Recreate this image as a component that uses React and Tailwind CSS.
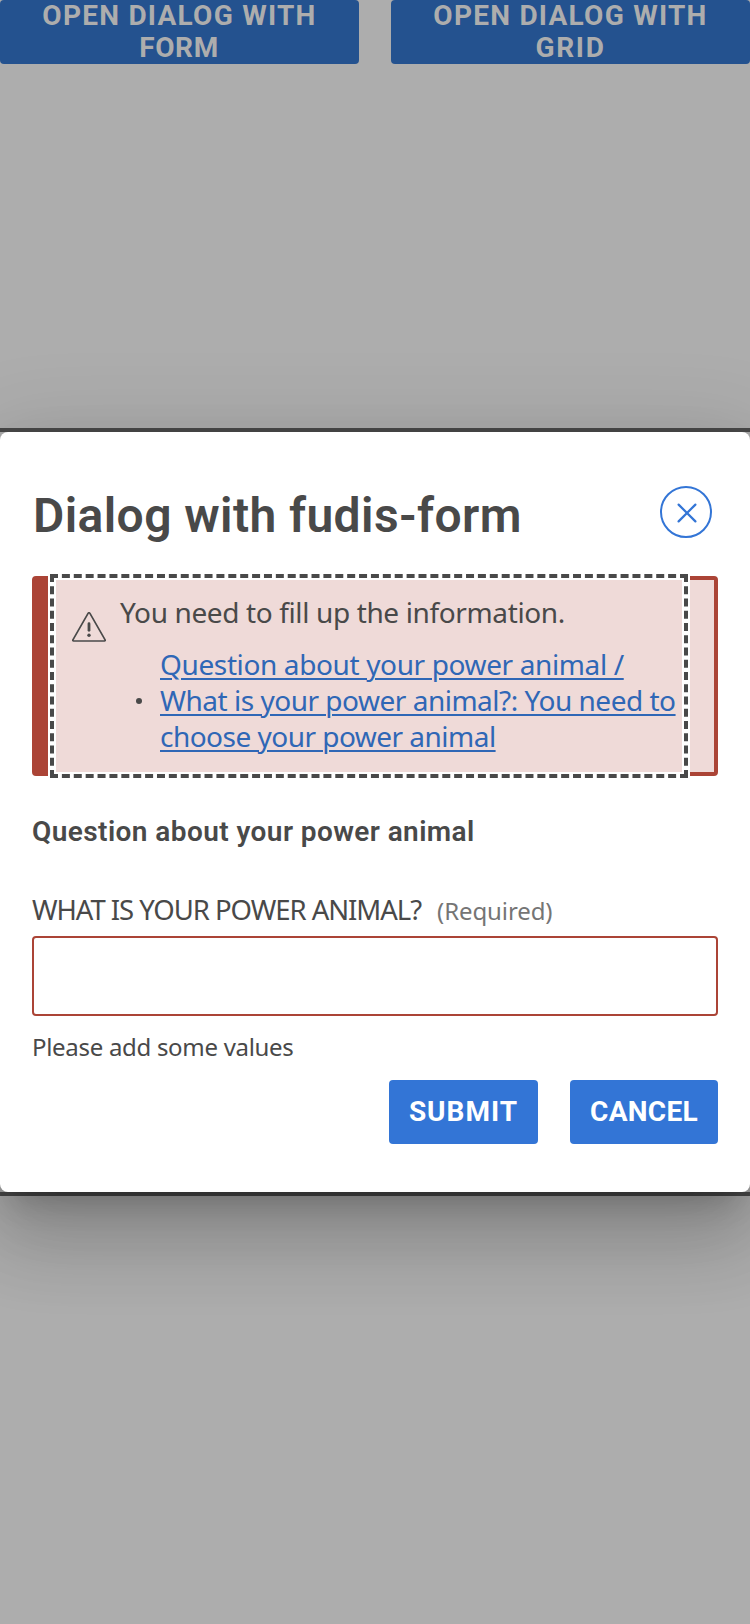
function WarningIcon() {
  return (
    <svg className="mt-8 h-8 w-9 shrink-0" viewBox="0 0 36 32" fill="none" stroke="#494949" strokeWidth="1.7" strokeLinejoin="round">
      <path d="M17.2 1.2 Q18 0.3 18.8 1.2 L34.1 27.8 Q34.4 29 33.5 29 H2.5 Q1.6 29 1.9 27.8 Z" />
      <path d="M18 11.7 V18.3" strokeWidth="2.8" strokeLinecap="round" />
      <circle cx="18" cy="23.3" r="1.7" fill="#494949" stroke="none" />
    </svg>
  );
}

function CloseIcon() {
  return (
    <svg className="mt-0.5 ml-px h-5 w-5" viewBox="0 0 20 20" fill="none" stroke="#3375d6" strokeWidth="2.2" strokeLinecap="round">
      <path d="M1.6 1.6 L18.4 18.4 M18.4 1.6 L1.6 18.4" />
    </svg>
  );
}

export default function App() {
  return (
    <div className="flex h-[1624px] w-[750px] flex-col overflow-hidden bg-[#adadad] font-['Noto_Sans',sans-serif] text-[#494949]">
      <div className="flex h-[428px] shrink-0 items-start gap-8 font-['Roboto',sans-serif] text-[28px] leading-8 font-bold text-[#adadad]">
        <button className="flex h-16 w-[359px] flex-col items-center justify-center rounded bg-[#24528f]">
          <span className="tracking-[1.25px]">OPEN DIALOG WITH</span>
          <span className="pr-px tracking-[0.6px]">FORM</span>
        </button>
        <button className="flex h-16 w-[359px] flex-col items-center justify-center rounded bg-[#24528f]">
          <span className="tracking-[1.25px]">OPEN DIALOG WITH</span>
          <span className="tracking-[1.7px]">GRID</span>
        </button>
      </div>

      <div className="h-[768px] shrink-0 border-y-4 border-[#494949]">
        <div
          role="dialog"
          className="flex h-[760px] flex-col rounded-lg bg-white px-8 shadow-[0_22px_30px_-14px_rgba(0,0,0,0.2),0_48px_76px_6px_rgba(0,0,0,0.14),0_18px_92px_16px_rgba(0,0,0,0.12)]"
        >
          <div className="flex h-[144px] shrink-0 items-start justify-between pt-[54px] pr-1.5">
            <h1 className="mt-0.5 ml-px font-['Roboto',sans-serif] text-[48px] leading-[56px] font-semibold tracking-[0.4px]">Dialog with fudis-form</h1>
            <button aria-label="Close" className="flex h-[52px] w-[52px] items-center justify-center rounded-full border-2 border-[#3375d6]">
              <CloseIcon />
            </button>
          </div>

          <div className="h-[200px] shrink-0 rounded border-4 border-l-16 border-[#ab4436] bg-[#efdad8] pr-8 pl-2">
            <div className="flex h-[192px] bg-[#efdad8] pl-[15px] shadow-[0_0_0_8px_#fff] outline-4 outline-offset-2 outline-[#494949] outline-dashed">
              <WarningIcon />
              <div className="pt-3.5 pl-[13px] text-[28px]">
                <p className="leading-9 whitespace-nowrap tracking-[-0.37px]">You need to fill up the information.</p>
                <ul className="mt-4 flex items-center">
                  <li className="flex items-center">
                    <span className="mt-0.5 ml-4 h-1.5 w-1.5 rounded-full bg-[#494949]" />
                    <a className="ml-[18px] flex flex-col items-start leading-9 whitespace-nowrap text-[#2f67b6] underline decoration-2 underline-offset-3">
                      <span className="tracking-[-0.374px]">Question about your power animal /</span>
                      <span className="tracking-[-0.49px]">What is your power animal?: You need to</span>
                      <span className="tracking-[-0.52px]">choose your power animal</span>
                    </a>
                  </li>
                </ul>
              </div>
            </div>
          </div>

          <h2 className="mt-9 font-['Roboto',sans-serif] text-[28px] leading-10 font-semibold tracking-[0.42px]">Question about your power animal</h2>

          <div className="mt-10 flex h-11 shrink-0 items-baseline">
            <label className="text-[27.5px] leading-9 tracking-[-1.04px] whitespace-nowrap">WHAT IS YOUR POWER ANIMAL?</label>
            <span className="ml-4 text-[24px] leading-9 tracking-[-0.1px] text-[#757575]">(Required)</span>
          </div>
          <input className="h-20 shrink-0 rounded border-2 border-[#ab4436] bg-white" />
          <p className="mt-[15px] text-[24px] leading-8 tracking-[-0.3px]">Please add some values</p>

          <div className="mt-[17px] flex justify-end gap-8 font-['Roboto',sans-serif] text-[28px] font-bold text-white">
            <button className="h-16 w-[149px] rounded bg-[#3375d6] tracking-[1px]">SUBMIT</button>
            <button className="h-16 w-[148px] rounded bg-[#3375d6] tracking-[0.3px]">CANCEL</button>
          </div>
        </div>
      </div>
    </div>
  );
}
